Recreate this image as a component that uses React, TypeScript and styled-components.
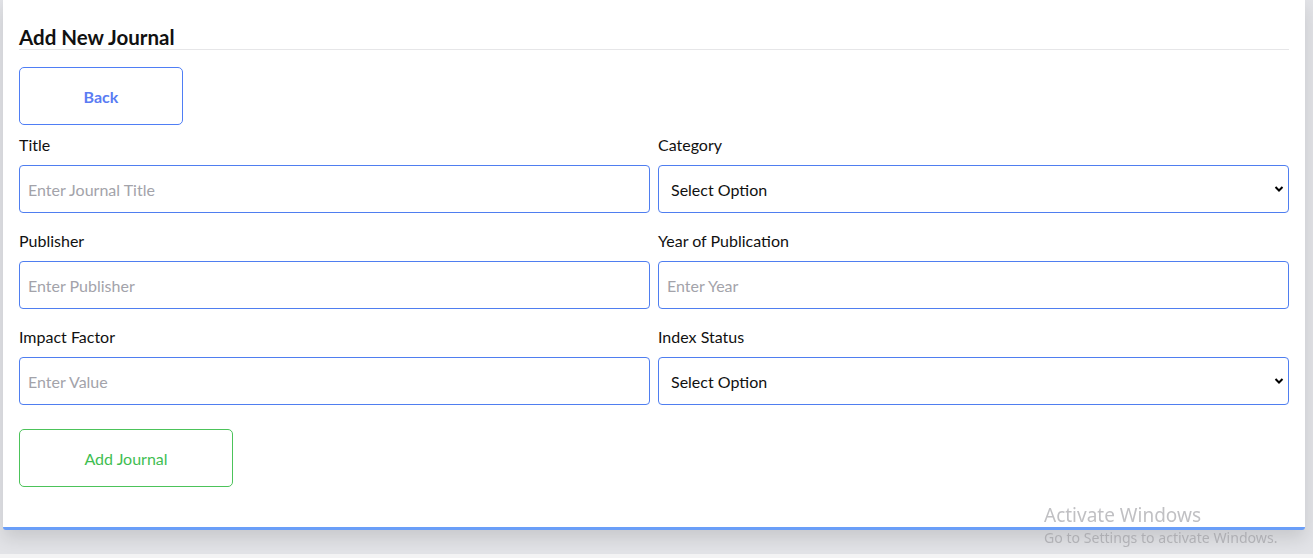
import React from "react";
import styled, { createGlobalStyle } from "styled-components";

const GlobalStyle = createGlobalStyle`
  html, body {
    margin: 0;
    padding: 0;
    background: #f3f3f4;
    font-family: Lato, "Noto Sans", "Liberation Sans", sans-serif;
  }
  * { box-sizing: border-box; }
`;

const Page = styled.div`
  background: #e2e3e7;
  padding: 0 8px 24px 3px;
  min-height: 554px;
`;

const Card = styled.div`
  background: #ffffff;
  padding: 25px 16px 40px 16px;
  border-bottom: 3px solid #6a9ef8;
  border-radius: 0 0 3px 3px;
  box-shadow: 0 8px 18px rgba(0, 0, 0, 0.12);
`;

const Heading = styled.h3`
  margin: 0;
  font-size: 20.5px;
  line-height: 24px;
  font-weight: 700;
  color: #111111;
  border-bottom: 1px solid #e6e6e8;
`;

const OutlineButton = styled.button<{ $tone: "blue" | "green"; $width: number }>`
  display: flex;
  align-items: center;
  justify-content: center;
  width: ${(p) => p.$width}px;
  height: 58px;
  background: #ffffff;
  border: 1px solid ${(p) => (p.$tone === "blue" ? "#4f7ef5" : "#4cc35a")};
  border-radius: 5px;
  color: ${(p) => (p.$tone === "blue" ? "#5a7cf3" : "#3fbe52")};
  font-family: inherit;
  font-size: 16px;
  font-weight: ${(p) => (p.$tone === "blue" ? 700 : 400)};
  cursor: pointer;
`;

const BackButton = styled(OutlineButton)`
  margin-top: 17px;
  margin-bottom: 8px;
`;

const SubmitButton = styled(OutlineButton)`
  margin-top: 8px;
`;

const Grid = styled.div`
  display: grid;
  grid-template-columns: 1fr 1fr;
  column-gap: 8px;
`;

const Field = styled.div`
  display: flex;
  flex-direction: column;
  margin-bottom: 16px;
`;

const Label = styled.label`
  font-size: 16px;
  line-height: 24px;
  color: #111111;
  margin-bottom: 8px;
`;

const Input = styled.input`
  height: 48px;
  border: 1px solid #4f7ef0;
  border-radius: 4px;
  padding: 0 8px;
  font-family: inherit;
  font-size: 16px;
  color: #111;
  outline: none;
  &::placeholder {
    color: #a3a3aa;
  }
`;

const Select = styled.select`
  height: 48px;
  border: 1px solid #4f7ef0;
  border-radius: 4px;
  padding: 0 8px 0 12px;
  font-family: inherit;
  font-size: 16px;
  color: #111;
  background: #ffffff;
  outline: none;
  appearance: none;
  background-image: url("data:image/svg+xml;utf8,<svg xmlns='http://www.w3.org/2000/svg' width='10' height='8' viewBox='0 0 10 8'><path d='M1.5 2 L5 5.5 L8.5 2' fill='none' stroke='black' stroke-width='2'/></svg>");
  background-repeat: no-repeat;
  background-position: right 4px center;
`;

const Watermark = styled.div`
  position: fixed;
  left: 1044px;
  top: 503px;
  color: rgba(150, 150, 155, 0.6);
  font-family: "Noto Sans", sans-serif;
  pointer-events: none;
`;

const WatermarkTitle = styled.div`
  font-size: 19px;
  line-height: 24px;
`;

const WatermarkSub = styled.div`
  font-size: 14.1px;
  line-height: 20px;
  margin-top: 1px;
`;

type FieldDef = { label: string; kind: "input" | "select"; placeholder?: string };

const fields: FieldDef[] = [
  { label: "Title", kind: "input", placeholder: "Enter Journal Title" },
  { label: "Category", kind: "select" },
  { label: "Publisher", kind: "input", placeholder: "Enter Publisher" },
  { label: "Year of Publication", kind: "input", placeholder: "Enter Year" },
  { label: "Impact Factor", kind: "input", placeholder: "Enter Value" },
  { label: "Index Status", kind: "select" },
];

export default function App() {
  return (
    <>
      <GlobalStyle />
      <Page>
        <Card>
          <Heading>Add New Journal</Heading>
          <BackButton $tone="blue" $width={164}>Back</BackButton>
          <Grid>
            {fields.map((f) => (
              <Field key={f.label}>
                <Label>{f.label}</Label>
                {f.kind === "input" ? (
                  <Input placeholder={f.placeholder} />
                ) : (
                  <Select defaultValue="">
                    <option value="">Select Option</option>
                  </Select>
                )}
              </Field>
            ))}
          </Grid>
          <SubmitButton $tone="green" $width={214}>Add Journal</SubmitButton>
        </Card>
      </Page>
      <Watermark>
        <WatermarkTitle>Activate Windows</WatermarkTitle>
        <WatermarkSub>Go to Settings to activate Windows.</WatermarkSub>
      </Watermark>
    </>
  );
}
